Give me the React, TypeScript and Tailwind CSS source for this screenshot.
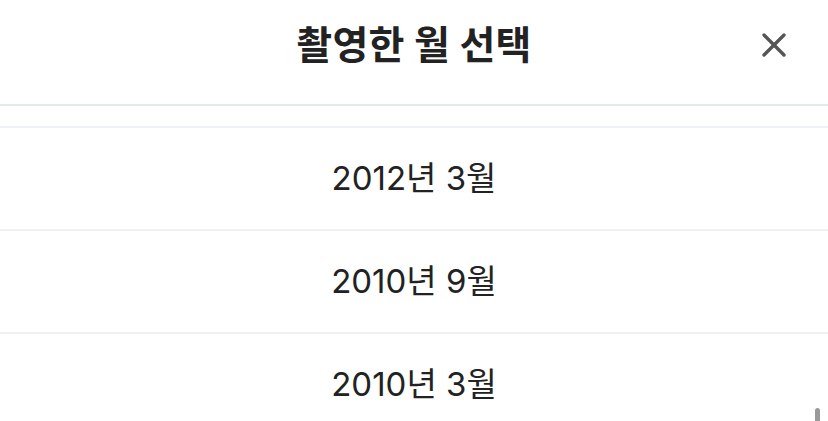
import { X } from 'lucide-react'

const months = ['2012년 3월', '2010년 9월', '2010년 3월']

export default function App() {
  return (
    <div
      className="relative w-[828px] h-[421px] overflow-hidden bg-white text-[#222]"
      style={{ fontFamily: 'Inter, "Noto Sans CJK KR", sans-serif' }}
    >
      <header className="relative flex h-[106px] items-center justify-center border-b-2 border-[#e4e8ef] pb-[14px]">
        <h1 className="text-[39px] font-bold tracking-[0.2px] text-[#222]">촬영한 월 선택</h1>
        <button className="absolute right-[34px] top-[25px] text-[#555]">
          <X className="h-[40px] w-[40px]" strokeWidth={2} />
        </button>
      </header>
      <div className="flex flex-col">
        <div className="h-[22px] border-b-2 border-[#eef1f5]" />
        {months.map((m) => (
          <div
            key={m}
            className="flex h-[103px] items-center justify-center border-b-2 border-[#eef1f5] text-[33px] text-[#222]"
          >
            {m}
          </div>
        ))}
      </div>
      <div className="absolute right-[8px] top-[408px] h-[16px] w-[5px] rounded-full bg-[#9a9a9a]" />
    </div>
  )
}
